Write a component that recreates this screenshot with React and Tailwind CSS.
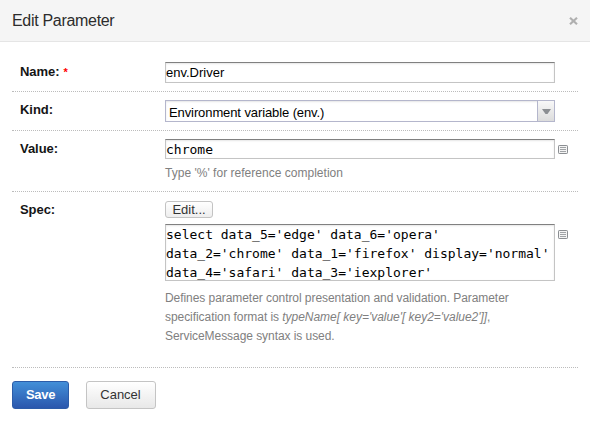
function ListIcon() {
  return (
    <svg width="10" height="9" viewBox="0 0 10 9" className="block shrink-0">
      <rect x="0.5" y="0.5" width="9" height="8" rx="0.7" fill="#f4f4f4" stroke="#8b8e92" />
      <path d="M2 2.5h6M2 4.5h6M2 6.5h6" stroke="#a0a3a6" />
    </svg>
  );
}

function Row({ label, required, className, labelClass = "pt-px", children }) {
  return (
    <div className={`flex border-b border-dotted border-[#bcbcbc] pl-2 ${className}`}>
      <div className={`w-[145px] shrink-0 text-[13px] leading-[18px] font-bold tracking-[-0.05px] text-[#151515] ${labelClass}`}>
        {label}
        {required && <span className="ml-1 inline-block text-[11px] text-[#ff0000]">*</span>}
      </div>
      <div className="w-[412px]">{children}</div>
    </div>
  );
}

const field =
  "w-[390px] shrink-0 border border-[#c4c4c4] border-t-[#808080] bg-white text-black shadow-[inset_0_1px_2px_rgba(0,0,0,0.1)]";
const mono = "font-['DejaVu_Sans_Mono',monospace] text-[13px]";
const hint = "text-[12px] leading-[19px] text-[#808080]";

export default function App() {
  return (
    <div className="h-[422px] w-[590px] bg-white font-['Liberation_Sans',Arial,sans-serif]">
      <header className="flex h-[42px] items-center justify-between border-b border-[#e5e5e5] bg-[#f5f5f5] pr-3 pl-3">
        <h1 className="text-[16px] leading-5 tracking-[-0.31px] text-[#2c2c2c]">Edit Parameter</h1>
        <svg width="9" height="8" viewBox="0 0 9 8" className="block">
          <path d="M1 0.8L8 7.2M8 0.8L1 7.2" stroke="#b0b0b0" strokeWidth="2.2" />
        </svg>
      </header>
      <main className="mx-3">
        <Row label="Name:" required className="h-[50px] pt-5">
          <div className={`${field} h-[21px] text-[13px] leading-[19px]`}>env.Driver</div>
        </Row>
        <Row label="Kind:" className="h-[39px] pt-2">
          <div className="flex h-[22px] w-[390px] border border-[#b4b6cc] bg-white shadow-[inset_0_1px_2px_rgba(0,0,0,0.1)]">
            <div className="flex-1 pl-[3px] text-[13px] leading-[23px] tracking-[-0.1px] text-black">
              Environment variable (env.)
            </div>
            <div className="flex w-[17px] items-center justify-center border-l border-[#b4b6cc] bg-linear-to-b from-[#f8f8f8] to-[#dcdcdc]">
              <svg width="9" height="5" viewBox="0 0 9 5" className="block">
                <path d="M0 0h9L5.5 5h-2z" fill="#8b8e92" />
              </svg>
            </div>
          </div>
        </Row>
        <Row label="Value:" className="h-[61px] pt-2">
          <div className="flex items-center gap-[3px]">
            <div className={`${field} ${mono} h-5 leading-[20px]`}>chrome</div>
            <ListIcon />
          </div>
          <p className={`${hint} mt-[5px] tracking-[0.02px]`}>Type '%' for reference completion</p>
        </Row>
        <Row label="Spec:" labelClass="pt-0" className="h-[176px] pt-[9px]">
          <button className="block h-[17px] w-12 rounded-[3px] border border-[#c3c3c3] bg-linear-to-b from-white to-[#eeeeee] text-[13px] leading-[15px] text-[#333]">
            Edit...
          </button>
          <div className="mt-[6px] flex gap-[3px]">
            <div className={`${field} ${mono} h-[57px] leading-[19px] whitespace-pre`}>
              {"select data_5='edge' data_6='opera'\ndata_2='chrome' data_1='firefox' display='normal'\ndata_4='safari' data_3='iexplorer'"}
            </div>
            <div className="pt-[6px]">
              <ListIcon />
            </div>
          </div>
          <p className={`${hint} mt-[8px] tracking-[-0.06px]`}>
            Defines parameter control presentation and validation. Parameter
            <br />
            specification format is <i className="tracking-[-0.03px]">typeName[ key='value'[ key2='value2']]</i>,
            <br />
            ServiceMessage syntax is used.
          </p>
        </Row>
        <footer className="flex gap-[17px] pt-[13px]">
          <button className="h-7 w-[57px] rounded-[3px] border border-[#2c5ca8] bg-linear-to-b from-[#438fd8] to-[#2b57ad] text-[13px] leading-[26px] font-bold tracking-[-0.3px] text-white">
            Save
          </button>
          <button className="h-7 w-[70px] rounded-[3px] border border-[#c4c4c4] bg-linear-to-b from-white to-[#e8e8e8] pr-px text-[13px] leading-[26px] text-[#333]">
            Cancel
          </button>
        </footer>
      </main>
    </div>
  );
}
